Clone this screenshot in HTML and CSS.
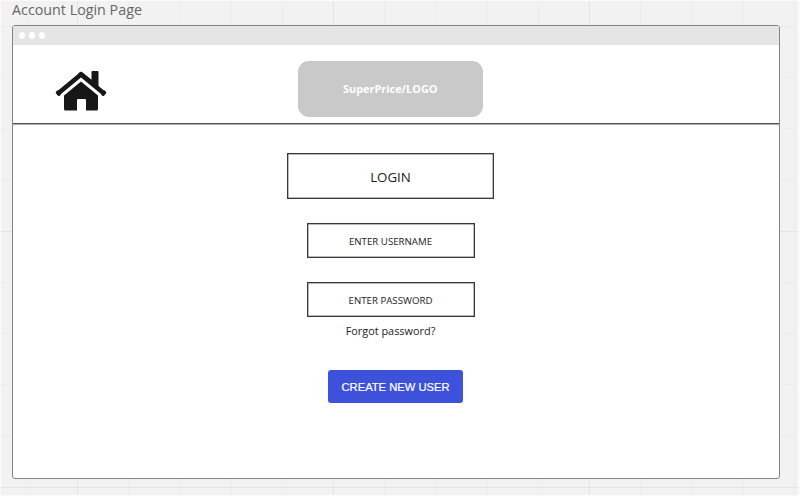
FILE: index.html
```html
<!DOCTYPE html>
<html lang="en">
<head>
<meta charset="utf-8">
<title>Account Login Page</title>
<link rel="stylesheet" href="styles.css">
</head>
<body>
<div class="board">
  <h1 class="frame-title">Account Login Page</h1>
  <main class="window">
    <div class="titlebar"><i class="dot"></i><i class="dot"></i><i class="dot"></i></div>
    <header class="header">
      <svg class="home" viewBox="0 0 52 42" aria-label="Home">
        <path d="M3 23.500 26 4.500 49 23.500" fill="none" stroke="#171717" stroke-width="4.600"/>
        <path d="M1.300 21.500Q.2 22.500 1 23.500L3 25.800Q3.800 26.500 5 25.500L6 24 3 20ZM50.700 21.500Q51.800 22.500 51 23.500L49 25.800Q48.200 26.500 47 25.500L46 24 49 20Z" fill="#171717"/>
        <path d="M23 3.800Q26 .3 29 3.800L36.500 9.800V2Q36.500 1 37.500 1H42.500Q43.500 1 43.500 2V17L37 14 26 6Z" fill="#171717"/>
        <path d="M26 11.500 43 25.500V39Q43 40.500 41.500 40.500H31V30Q31 29 30 29H23Q22 29 22 30V40.500H10.500Q9 40.500 9 39V25.500Z" fill="#171717"/>
      </svg>
      <div class="logo">SuperPrice/LOGO</div>
    </header>
    <section class="content">
      <div class="box login">LOGIN</div>
      <div class="box field">ENTER USERNAME</div>
      <div class="box field">ENTER PASSWORD</div>
      <a class="forgot">Forgot password?</a>
      <button class="create">CREATE NEW USER</button>
    </section>
  </main>
</div>
</body>
</html>
```
FILE: styles.css
```css
* { box-sizing: border-box; }
body { margin: 0; background: #fff; font-family: "Open Sans", sans-serif; color: #222; }
.board {
  width: 800px;
  height: 496px;
  overflow: hidden;
  padding: 0 20px 0 11px;
  border: solid #fbfbfb;
  border-width: 1px 2px 1px 1px;
  background-color: #f2f2f2;
  background-image:
    linear-gradient(90deg, #e4e4e4 1px, transparent 1px),
    linear-gradient(#e4e4e4 1px, transparent 1px),
    linear-gradient(90deg, #ebebeb 1px, transparent 1px),
    linear-gradient(#ebebeb 1px, transparent 1px);
  background-size: 256px 256px, 256px 256px, 51.2px 51.2px, 51.2px 51.2px;
  background-position: 76px 0, 0 230px, 24.800px 0, 0 25.200px;
}
.frame-title {
  margin: 0;
  height: 24px;
  font-size: 14.300px;
  line-height: 18px;
  font-weight: 400;
  color: #666;
  white-space: nowrap;
}
.window {
  width: 768px;
  height: 454px;
  overflow: hidden;
  border: 1px solid #858585;
  border-radius: 3px;
  background: #fff;
}
.titlebar {
  display: flex;
  align-items: center;
  gap: 4px;
  height: 19px;
  padding-left: 5.500px;
  background: #e5e5e5;
}
.dot { width: 6.300px; height: 6.300px; border-radius: 50%; background: #fff; }
.header {
  display: grid;
  grid-template-columns: 284.500px 185.500px;
  height: 79px;
  padding-top: 16px;
  border-bottom: 1px solid #555;
  box-shadow: 0 1px #aaa;
}
.home { width: 52px; height: 42px; margin: 9px 0 0 41.500px; }
.logo {
  height: 55.500px;
  border-radius: 11px;
  background: #c9c9c9;
  color: #fff;
  font-size: 10.900px;
  font-weight: 700;
  line-height: 56px;
  text-align: center;
}
.content { display: flex; flex-direction: column; align-items: center; padding: 29px 11px 0 0; }
.box { display: flex; align-items: center; justify-content: center; border: 1px solid #383838; box-shadow: inset 0 0 0 .5px #777; }
.login { width: 207px; height: 46px; padding-top: 1px; font-size: 13.300px; }
.field { width: 168px; height: 35px; margin-top: 24px; padding-top: 1px; font-size: 9.700px; }
.forgot { height: 18px; margin-top: 5px; font-size: 10.900px; line-height: 18px; }
.create {
  width: 135px;
  height: 33px;
  margin: 30px 0 0 10px;
  padding: 0;
  border: 0;
  border-radius: 3px;
  background: #3d51da;
  color: #fff;
  font: 11.200px "Liberation Sans", Arial, sans-serif;
  -webkit-text-stroke: .2px #fff;
}
```
